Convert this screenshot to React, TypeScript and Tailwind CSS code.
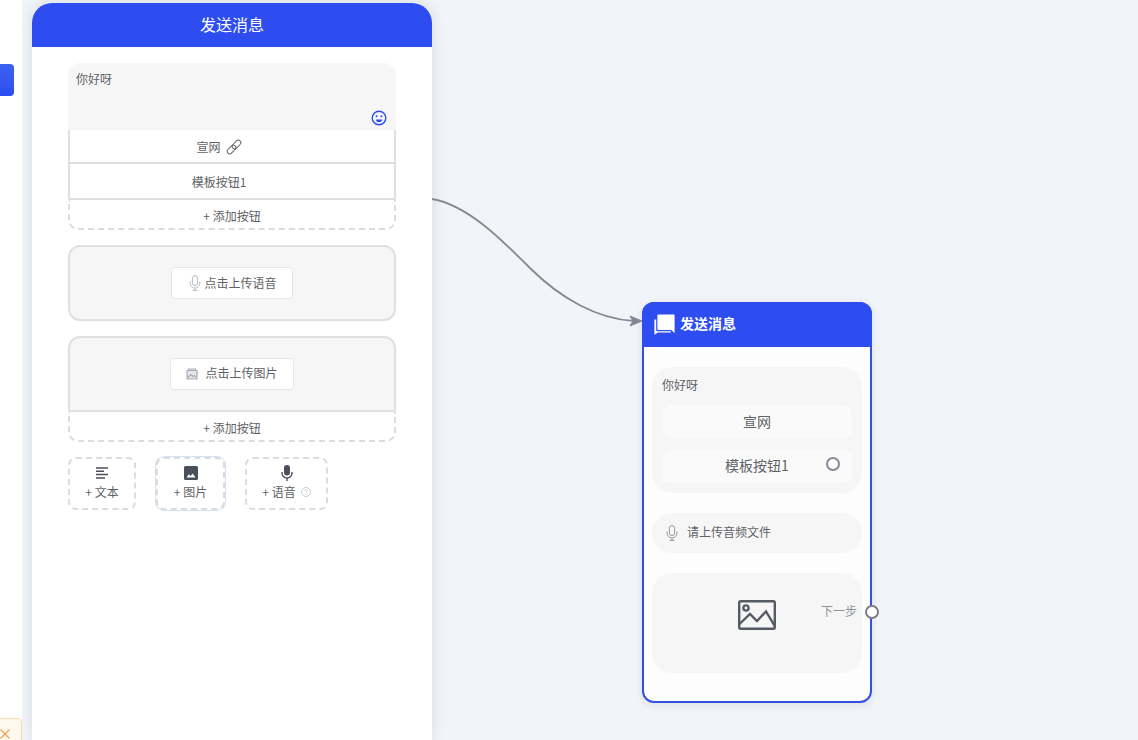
const FONT = "font-['Noto_Sans_CJK_SC','Liberation_Sans',sans-serif]";

function MicOutline({ className }: { className?: string }) {
  return (
    <svg viewBox="0 0 12 16" className={className} fill="none" stroke="currentColor" strokeWidth="0.8">
      <rect x="3.4" y="0.6" width="5.2" height="10" rx="2.6" />
      <path d="M1.2 6.6v1.6a4.8 4.8 0 0 0 9.6 0V6.6M6 13v2.4M3.4 15.4h5.2" />
    </svg>
  );
}

function MicSolid({ className }: { className?: string }) {
  return (
    <svg viewBox="0 0 12 16" className={className}>
      <rect x="3" y="0" width="6" height="10.5" rx="3" fill="currentColor" />
      <path d="M1 7v1a5 5 0 0 0 10 0V7M6 13v3" fill="none" stroke="currentColor" strokeWidth="1.4" />
    </svg>
  );
}

function Dashed({ className, children }: { className: string; children: React.ReactNode }) {
  return <div className={`flex flex-col items-center border-2 border-dashed border-[#dcdcdc] text-[12px] leading-[16px] text-[#606266] ${className}`}>{children}</div>;
}

function AddRow() {
  return (
    <div className="flex h-[30px] items-center justify-center rounded-b-[10px] border-2 border-t-0 border-dashed border-[#dcdcdc] pt-[3px] text-[12px] text-[#606266]">
      + 添加按钮
    </div>
  );
}

function Panel() {
  return (
    <div className="z-10 ml-[10px] mt-[3px] h-[737px] w-[400px] shrink-0 rounded-t-[20px] bg-white shadow-[0_0_14px_rgba(120,135,160,0.22)]">
      <div className="flex h-[44px] items-center justify-center rounded-t-[20px] bg-[#2d4df0] pb-[3px] text-[16px] text-white">发送消息</div>
      <div className="px-[36px] pt-[16px]">
        <div className="relative h-[67px] rounded-t-[12px] bg-[#f6f6f7] px-2 pt-[7px] text-[12px] leading-[18px] text-[#606266]">
          你好呀
          <svg viewBox="0 0 16 16" className="absolute right-[9px] top-[47px] h-[16px] w-[16px] text-[#2d4df0]" fill="none" stroke="currentColor" strokeWidth="1.4">
            <circle cx="8" cy="8" r="6.8" />
            <circle cx="5.6" cy="6.3" r="1" fill="currentColor" stroke="none" />
            <circle cx="10.4" cy="6.3" r="1" fill="currentColor" stroke="none" />
            <path d="M5 9.6h6a3 2.6 0 0 1-6 0z" fill="currentColor" stroke="none" />
          </svg>
        </div>
        <div className="flex h-[34px] items-center justify-center gap-[5px] border-2 border-t-0 border-[#e0e0e0] pr-[26px] pt-[2px] text-[12px] text-[#606266]">
          宣网
          <svg viewBox="0 0 16 16" className="h-[16px] w-[16px] text-[#606266]" fill="none" stroke="currentColor" strokeWidth="1">
            <rect x="0.5" y="8" width="10" height="5" rx="2.5" transform="rotate(-45 5.5 10.5)" />
            <rect x="5.5" y="3" width="10" height="5" rx="2.5" transform="rotate(-45 10.5 5.5)" />
          </svg>
        </div>
        <div className="flex h-[36px] items-center justify-center border-2 border-t-0 border-[#e0e0e0] pr-[26px] pt-[2px] text-[12px] text-[#606266]">模板按钮1</div>
        <AddRow />

        <div className="mt-[15px] flex h-[76px] items-center justify-center rounded-[12px] border-2 border-[#e0e0e0] bg-[#f6f6f7]">
          <div className="flex h-[32px] w-[122px] items-center justify-center gap-[3px] rounded-[4px] border border-[#e4e7ed] bg-white pl-[2px] text-[12px] text-[#606266]">
            <MicOutline className="h-[16px] w-[12px] text-[#a8abb2]" />
            点击上传语音
          </div>
        </div>

        <div className="mt-[15px] flex h-[76px] items-center justify-center rounded-t-[12px] border-2 border-[#e0e0e0] bg-[#f6f6f7]">
          <div className="flex h-[32px] w-[124px] items-center justify-center gap-[7px] rounded-[4px] border border-[#e4e7ed] bg-white pb-[3px] text-[12px] text-[#606266]">
            <svg viewBox="0 0 12 12" className="mt-[3px] h-[12px] w-[12px] text-[#a8abb2]" fill="none" stroke="currentColor" strokeWidth="1.2">
              <path d="M2.5 2.5V1h7v1.5" />
              <rect x="1" y="2.5" width="10" height="8.5" rx="0.6" fill="#e6e7ea" />
              <path d="M2 9.5 5 6.5l2 2 1.5-1 1.5 2" />
            </svg>
            点击上传图片
          </div>
        </div>
        <AddRow />

        <div className="mt-[14px] flex items-start">
          <Dashed className="mt-px h-[53px] w-[68px] rounded-[8px] pt-[7px]">
            <svg viewBox="0 0 12 14" className="h-[14px] w-[12px] text-[#4b4f5c]" fill="none" stroke="currentColor" strokeWidth="1.5">
              <path d="M0 2h12M0 5.3h8M0 8.6h12M0 12h9" />
            </svg>
            <span className="mt-[4px]">+ 文本</span>
          </Dashed>
          <div className="ml-[19px] rounded-[9px] bg-[#d6e0f5]">
            <Dashed className="m-px h-[53px] w-[69px] rounded-[8px] border-[#c9d5ee] bg-white pt-[7px]">
              <svg viewBox="0 0 14 14" className="h-[14px] w-[14px] text-[#4b4f5c]">
                <path fill="currentColor" fillRule="evenodd" d="M1.5 0h11A1.5 1.5 0 0 1 14 1.5v11a1.5 1.5 0 0 1-1.5 1.5h-11A1.5 1.5 0 0 1 0 12.5v-11A1.5 1.5 0 0 1 1.5 0zM2.5 11.5h9L8.7 7.4 6.6 10 5 8.2z" />
              </svg>
              <span className="mt-[4px]">+ 图片</span>
            </Dashed>
          </div>
          <Dashed className="ml-[19px] mt-px h-[53px] w-[83px] rounded-[8px] pt-[6px]">
            <MicSolid className="h-[16px] w-[12px] text-[#4b4f5c]" />
            <span className="mt-[3px] flex items-center gap-[5px]">
              + 语音
              <svg viewBox="0 0 12 12" className="h-[10px] w-[10px] text-[#b4b6bb]" fill="none" stroke="currentColor" strokeWidth="0.8">
                <circle cx="6" cy="6" r="5.4" />
                <path d="M4.4 4.6a1.6 1.6 0 1 1 2.4 1.4c-.5.3-.8.6-.8 1.2M6 8.4v1" />
              </svg>
            </span>
          </Dashed>
        </div>
      </div>
    </div>
  );
}

function FlowNode() {
  return (
    <div className="absolute left-[210px] top-[302px] h-[401px] w-[230px] rounded-[12px] border-2 border-[#3350e4] bg-[#fdfdfe] shadow-[0_2px_8px_rgba(120,135,160,0.18)]">
      <div className="-mx-[2px] -mt-[2px] flex h-[45px] items-center gap-[5px] rounded-t-[12px] bg-[#2d4df0] pb-[3px] pl-[12px] text-[14px] font-bold text-white">
        <svg viewBox="0 0 21 21" className="mt-[3px] h-[21px] w-[21px]" fill="white">
          <path d="M4.4 0.4h15.2a1 1 0 0 1 1 1V19l-3.4-3H4.4a1 1 0 0 1-1-1V1.4a1 1 0 0 1 1-1z" />
          <path d="M0.4 5.4h1.8v10.8a1 1 0 0 0 1 1h13.6v1.4H4L0.4 20.8z" />
        </svg>
        发送消息
      </div>
      <div className="px-[8px] pt-[20px] text-[12px] text-[#606266]">
        <div className="h-[126px] rounded-[20px] bg-[#f6f6f7] px-[10px] pt-[9px]">
          <div className="leading-[18px]">你好呀</div>
          <div className="mt-[11px] flex h-[34px] items-center justify-center rounded-[10px] bg-[#fafafb] pb-[2px] text-[14px]">宣网</div>
          <div className="relative mt-[10px] flex h-[34px] items-center justify-center rounded-[10px] bg-[#fafafb] pb-[2px] text-[14px]">
            模板按钮1
            <div className="absolute right-[12px] top-[8px] h-[14px] w-[14px] rounded-full border-2 border-[#878a94] bg-white" />
          </div>
        </div>
        <div className="mt-[20px] flex h-[40px] items-center gap-[9px] rounded-[20px] bg-[#f6f6f7] pl-[14px]">
          <MicOutline className="h-[16px] w-[12px] text-[#7d8087]" />
          <span className="mt-[-2px]">请上传音频文件</span>
        </div>
        <div className="relative mt-[20px] flex h-[100px] items-center justify-center rounded-[20px] bg-[#f6f6f7]">
          <svg viewBox="0 0 38 30" className="mt-[-16px] h-[30px] w-[38px] text-[#565b66]" fill="none" stroke="currentColor" strokeWidth="2.4">
            <rect x="1.2" y="1.2" width="35.6" height="27.6" rx="1.5" />
            <circle cx="8" cy="8" r="2.6" />
            <path d="M1 24.5 12 14l7 7 9-9.5 9 15" />
          </svg>
          <span className="absolute right-[5px] top-[29px] leading-[18px] text-[#909399]">下一步</span>
        </div>
      </div>
      <div className="absolute left-[221px] top-[301px] h-[14px] w-[14px] rounded-full border-2 border-[#7c7f88] bg-white" />
    </div>
  );
}

export default function App() {
  return (
    <div className={`flex h-[740px] w-[1138px] overflow-hidden bg-[#f1f4f8] ${FONT}`}>
      <div className="relative h-full w-[22px] shrink-0 bg-white">
        <div className="absolute left-0 top-[64px] h-[32px] w-[14px] rounded-r-[4px] bg-gradient-to-b from-[#3d62ee] to-[#2d4df0]" />
        <div className="absolute left-[-6px] top-[718px] flex h-[30px] w-[28px] items-start justify-center rounded-[5px] border border-[#fbd9a8] bg-[#fff8ec] pr-[6px] pt-[10px]">
          <svg viewBox="0 0 10 10" className="h-[10px] w-[10px] text-[#f0a35a]" fill="none" stroke="currentColor" strokeWidth="1.2">
            <path d="M0.5 0.5l9 9M9.5 0.5l-9 9" />
          </svg>
        </div>
      </div>
      <Panel />
      <div className="relative h-full flex-1">
        <svg className="absolute left-0 top-[190px] h-[140px] w-[212px]" viewBox="0 0 212 140" fill="none">
          <path d="M0 9C35 15 68 48 98 78S165 129 202 131" stroke="#858995" strokeWidth="1.8" />
          <path d="M198 126 210 131 198 136 201 131z" fill="#858995" stroke="#858995" strokeWidth="1" />
        </svg>
        <FlowNode />
      </div>
    </div>
  );
}
